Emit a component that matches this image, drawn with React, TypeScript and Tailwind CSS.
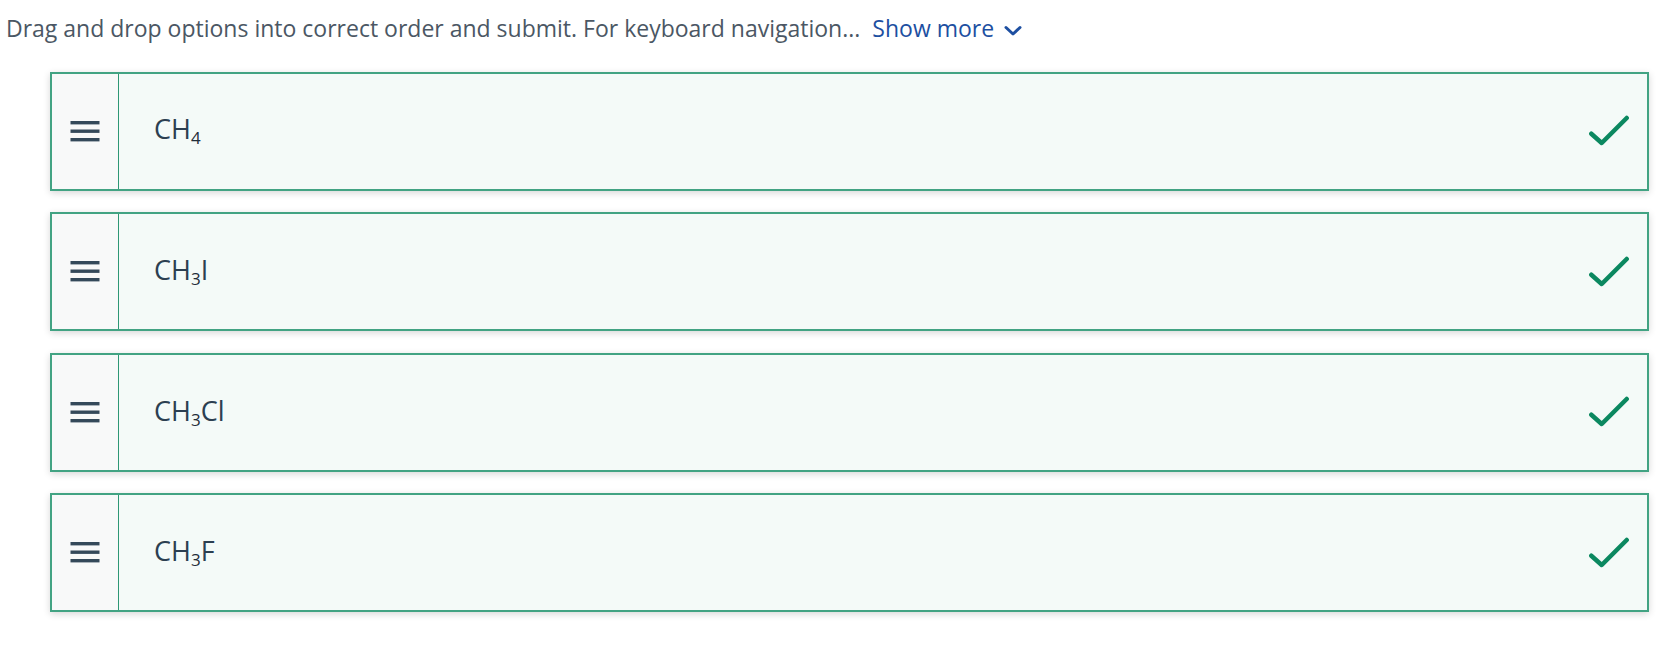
import React from "react";

const items: { base: string; sub: string; rest: string }[] = [
  { base: "CH", sub: "4", rest: "" },
  { base: "CH", sub: "3", rest: "I" },
  { base: "CH", sub: "3", rest: "Cl" },
  { base: "CH", sub: "3", rest: "F" },
];

function Hamburger() {
  return (
    <svg width="30" height="21" viewBox="0 0 30 21" aria-hidden>
      <rect x="0.5" y="0" width="29" height="3.4" fill="#34495a" />
      <rect x="0.5" y="8.5" width="29" height="3.4" fill="#34495a" />
      <rect x="0.5" y="17" width="29" height="3.4" fill="#34495a" />
    </svg>
  );
}

function Check() {
  return (
    <svg width="40" height="32" viewBox="0 0 40 32" aria-hidden>
      <polyline
        points="2.3,18.7 12.7,28 37.7,3"
        fill="none"
        stroke="#0b8860"
        strokeWidth="4.5"
        strokeLinecap="round"
        strokeLinejoin="round"
      />
    </svg>
  );
}

export default function App() {
  return (
    <div className="w-[1674px] h-[652px] bg-white font-['Open_Sans','Liberation_Sans',sans-serif]">
      <div className="h-[41px] pt-[15px] pl-[6px] text-[23px] leading-[1.2] text-[#4b5764] flex items-start">
        <span className="whitespace-nowrap">Drag and drop options into correct order and submit. For keyboard navigation...</span>
        <span className="ml-[12px] text-[#1d4fa1] flex items-center whitespace-nowrap">
          Show more
          <svg className="ml-[10px] mt-[4px]" width="18" height="12" viewBox="0 0 18 12" aria-hidden>
            <polyline
              points="2,2.5 9,9 16,2.5"
              fill="none"
              stroke="#1d4fa1"
              strokeWidth="3"
              strokeLinecap="round"
              strokeLinejoin="round"
            />
          </svg>
        </span>
      </div>
      <div className="mt-[30.7px] ml-[49.5px] w-[1599px] flex flex-col gap-[21.6px]">
        {items.map((it, i) => (
          <div
            key={i}
            className="h-[119px] flex border-2 border-[#42a383] bg-[#f4faf8] shadow-[0_2px_7px_rgba(0,0,0,0.16)]"
          >
            <div className="w-[67.5px] shrink-0 bg-[#f8f9f9] border-r-[1.5px] border-[#2e9775] flex items-center justify-center">
              <Hamburger />
            </div>
            <div className="flex-1 flex items-center pl-[35px] pr-[18px]">
              <span className="text-[27px] leading-[1.2] text-[#2c3f51]">
                {it.base}
                <span className="text-[17px] align-[-5px] text-[#1f2d3a]">{it.sub}</span>
                {it.rest}
              </span>
              <div className="ml-auto flex items-center">
                <Check />
              </div>
            </div>
          </div>
        ))}
      </div>
    </div>
  );
}
